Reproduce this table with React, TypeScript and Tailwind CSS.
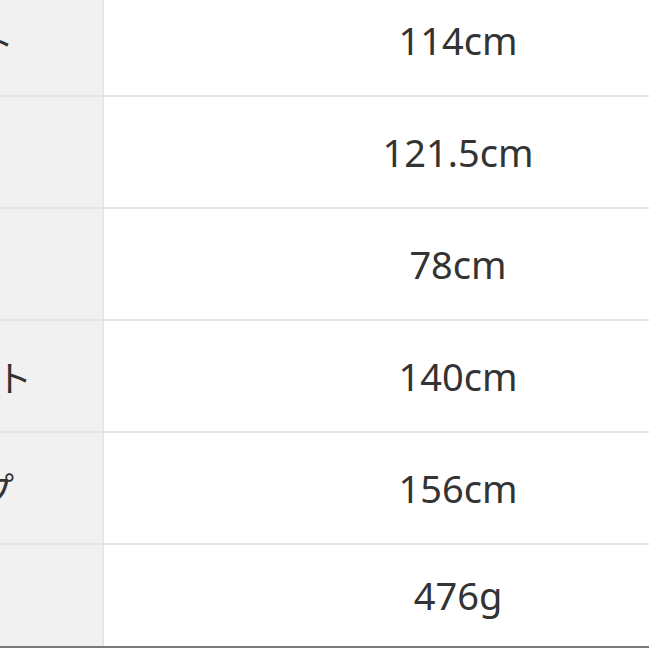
const rows = [
  { label: "バスト", value: "114cm" },
  { label: "身幅", value: "121.5cm" },
  { label: "着丈", value: "78cm" },
  { label: "ウエスト", value: "140cm" },
  { label: "ヒップ", value: "156cm" },
  { label: "重さ", value: "476g" },
];

export default function App() {
  return (
    <div className="h-[649px] w-[649px] overflow-hidden bg-white">
      <div className="-ml-[158px] -mt-[15px] w-[970px] border-b-2 border-[#7a7a7a]">
        {rows.map((row, i) => (
          <div
            key={row.value}
            className={
              "flex " +
              (i === rows.length - 1
                ? "h-[101px]"
                : "h-[112px] border-b-2 border-[#e4e4e4]")
            }
          >
            <div className="flex w-[262px] shrink-0 items-center justify-center border-r-2 border-[#e6e6e6] bg-[#f1f1f1] pr-[24px] font-['Noto_Sans_CJK_JP',sans-serif] text-[36px] text-[#333]">
              {row.label}
            </div>
            <div className="flex flex-1 items-center justify-center font-['Noto_Sans',sans-serif] text-[38px] text-[#333]">
              {row.value}
            </div>
          </div>
        ))}
      </div>
    </div>
  );
}
